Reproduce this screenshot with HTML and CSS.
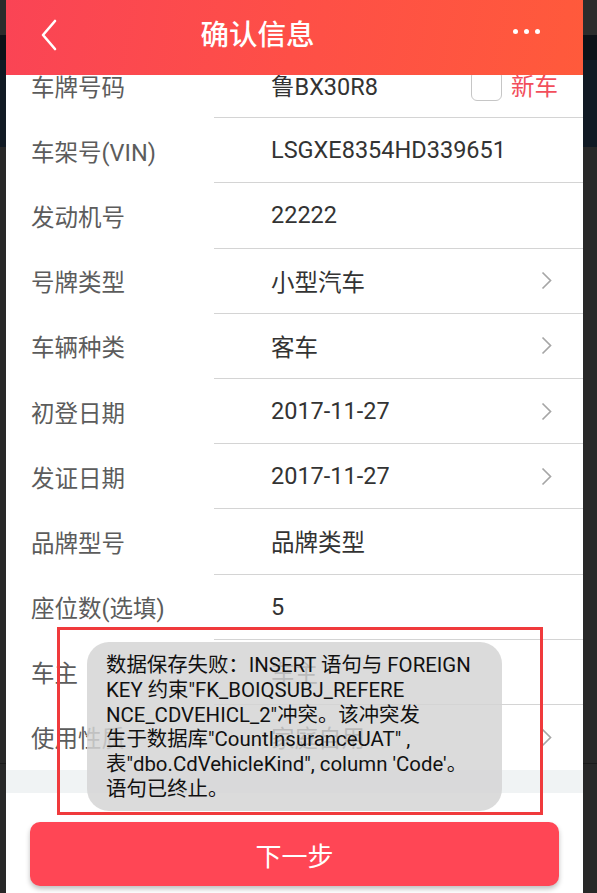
FILE: index.html
```html
<!DOCTYPE html>
<html lang="zh-CN">
<head>
  <meta charset="UTF-8">
  <title>确认信息</title>
  <link rel="stylesheet" href="styles.css">
</head>
<body>

<div class="screen">
  <div class="topbar">
    <div class="back">
      <svg width="18" height="32" viewBox="0 0 18 32"><path d="M15 2 L3 16 L15 30" fill="none" stroke="#fff" stroke-width="2.6" stroke-linecap="round" stroke-linejoin="round"/></svg>
    </div>
    <div class="title">确认信息</div>
    <div class="more"><span></span><span></span><span></span></div>
  </div>

  <div class="form">
    <div class="row">
      <div class="label">车牌号码</div>
      <div class="cell">
        <span class="value">鲁BX30R8</span>
        <span class="newcar"><span class="check"></span>新车</span>
      </div>
    </div>
    <div class="row">
      <div class="label">车架号(VIN)</div>
      <div class="cell"><span class="value">LSGXE8354HD339651</span></div>
    </div>
    <div class="row">
      <div class="label">发动机号</div>
      <div class="cell"><span class="value">22222</span></div>
    </div>
    <div class="row">
      <div class="label">号牌类型</div>
      <div class="cell"><span class="value">小型汽车</span><svg class="arrow" width="11" height="19" viewBox="0 0 11 19"><path d="M1.5 1.5 L9.5 9.5 L1.5 17.5" fill="none" stroke="#a6a6a6" stroke-width="1.7"/></svg></div>
    </div>
    <div class="row">
      <div class="label">车辆种类</div>
      <div class="cell"><span class="value">客车</span><svg class="arrow" width="11" height="19" viewBox="0 0 11 19"><path d="M1.5 1.5 L9.5 9.5 L1.5 17.5" fill="none" stroke="#a6a6a6" stroke-width="1.7"/></svg></div>
    </div>
    <div class="row">
      <div class="label">初登日期</div>
      <div class="cell"><span class="value">2017-11-27</span><svg class="arrow" width="11" height="19" viewBox="0 0 11 19"><path d="M1.5 1.5 L9.5 9.5 L1.5 17.5" fill="none" stroke="#a6a6a6" stroke-width="1.7"/></svg></div>
    </div>
    <div class="row">
      <div class="label">发证日期</div>
      <div class="cell"><span class="value">2017-11-27</span><svg class="arrow" width="11" height="19" viewBox="0 0 11 19"><path d="M1.5 1.5 L9.5 9.5 L1.5 17.5" fill="none" stroke="#a6a6a6" stroke-width="1.7"/></svg></div>
    </div>
    <div class="row">
      <div class="label">品牌型号</div>
      <div class="cell"><span class="value">品牌类型</span></div>
    </div>
    <div class="row">
      <div class="label">座位数(选填)</div>
      <div class="cell"><span class="value">5</span></div>
    </div>
    <div class="row">
      <div class="label">车主</div>
      <div class="cell"><span class="value">车主</span></div>
    </div>
    <div class="row last">
      <div class="label">使用性质</div>
      <div class="cell"><span class="value">家庭自用</span><svg class="arrow" width="11" height="19" viewBox="0 0 11 19"><path d="M1.5 1.5 L9.5 9.5 L1.5 17.5" fill="none" stroke="#a6a6a6" stroke-width="1.7"/></svg></div>
    </div>
  </div>

  <div class="band"></div>

  <div class="footer">
    <button class="next">下一步</button>
  </div>

  <div class="mark"></div>
  <div class="toast">
    数据保存失败：INSERT 语句与 FOREIGN<br>
    KEY 约束"FK_BOIQSUBJ_REFERE<br>
    NCE_CDVEHICL_2"冲突。该冲突发<br>
    生于数据库"CountInsuranceUAT" ,<br>
    表"dbo.CdVehicleKind", column 'Code'。<br>
    语句已终止。
  </div>
</div>

</body>
</html>
```

FILE: styles.css
```css
body {
  margin: 0;
  height: 893px;
  overflow: hidden;
  font-family: Roboto, "Noto Sans CJK SC", sans-serif;
  background: linear-gradient(to bottom,
    #2c2c2c 0, #2c2c2c 35px,
    #0d1117 35px, #0d1117 60px,
    #111a24 60px, #111a24 147px,
    #282828 147px, #282828 763px,
    #1b1b1b 763px, #1b1b1b 764px,
    #282828 764px);
}

.screen {
  position: relative;
  width: 577px;
  height: 893px;
  margin-left: 6px;
  background-color: #fff;
  overflow: hidden;
}

/* header */
.topbar {
  position: relative;
  z-index: 2;
  height: 75px;
  display: flex;
  align-items: center;
  background: linear-gradient(100deg, #fa4455 0%, #fe4f47 50%, #ff5a3b 100%);
  color: #fff;
}

.back {
  width: 70px;
  padding-left: 34px;
  box-sizing: border-box;
  display: flex;
  margin-top: -6px;
}

.title {
  flex: 1;
  text-align: center;
  padding-right: 74px;
  font-size: 28.5px;
  font-weight: 500;
  margin-top: -10px;
}

.more {
  width: 70px;
  display: flex;
  gap: 6px;
  margin-top: -12px;
}

.more span {
  width: 5px;
  height: 5px;
  border-radius: 50%;
  background-color: #fff;
}

/* form rows */
.form {
  margin-top: -22px;
}

.row {
  display: flex;
  height: 65.2px;
  font-size: 23.5px;
}

.label {
  width: 208px;
  padding-left: 25px;
  box-sizing: border-box;
  display: flex;
  align-items: center;
  color: #5c5c5c;
  white-space: nowrap;
}

.cell {
  flex: 1;
  display: flex;
  align-items: center;
  padding-left: 57px;
  padding-right: 25px;
  border-bottom: 1px solid #d4d4d4;
  color: #333;
}

.row.last .cell {
  border-bottom: none;
}

.value {
  flex: 1;
}

.arrow {
  margin-right: 6px;
}

.newcar {
  display: flex;
  align-items: center;
  gap: 9px;
  color: #f24e5b;
}

.check {
  width: 29px;
  height: 29px;
  border: 1.5px solid #c6c6c6;
  border-radius: 6px;
}

.band {
  height: 23px;
  background-color: #f0f3f4;
}

.footer {
  padding: 29px 24px 0;
}

.next {
  width: 100%;
  height: 64px;
  border: none;
  border-radius: 10px;
  background-color: #ff4655;
  color: #fff;
  font-family: Roboto, "Noto Sans CJK SC", sans-serif;
  font-size: 26px;
  box-shadow: 0 3px 5px rgba(0,0,0,0.25);
}

/* error toast over the form */
.toast {
  position: absolute;
  left: 81px;
  top: 642px;
  width: 415px;
  height: 169px;
  box-sizing: border-box;
  padding: 11px 0 0 19px;
  border-radius: 22px;
  background-color: rgba(212,212,212,0.84);
  color: #111;
  font-size: 20.4px;
  line-height: 24.8px;
  white-space: nowrap;
}

.mark {
  position: absolute;
  left: 51px;
  top: 627px;
  width: 486px;
  height: 188px;
  box-sizing: border-box;
  border: 3px solid #f03a3c;
}
```
